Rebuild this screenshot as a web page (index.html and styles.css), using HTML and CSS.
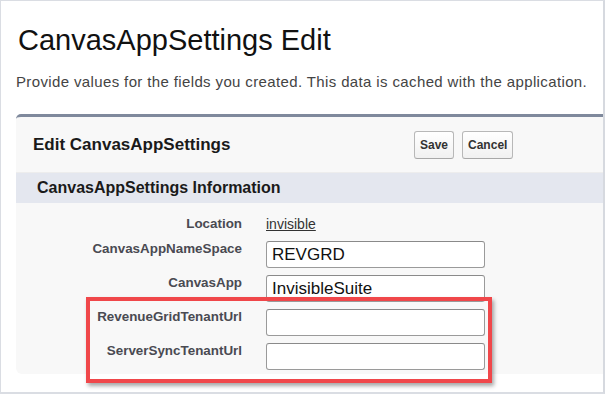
FILE: index.html
```html
<!DOCTYPE html>
<html>
<head>
<meta charset="utf-8">
<link rel="stylesheet" href="styles.css">
</head>
<body>
<div class="frame">
  <h1 class="title">CanvasAppSettings Edit</h1>
  <p class="desc">Provide values for the fields you created. This data is cached with the application.</p>
  <div class="panel">
    <div class="panel-head">
      <h2 class="panel-title">Edit CanvasAppSettings</h2>
      <div class="buttons">
        <button class="btn">Save</button>
        <button class="btn">Cancel</button>
      </div>
    </div>
    <div class="section-bar">CanvasAppSettings Information</div>
    <div class="fields">
      <div class="row row-static">
        <div class="label">Location</div>
        <div class="value"><a class="link">invisible</a></div>
      </div>
      <div class="row">
        <div class="label">CanvasAppNameSpace</div>
        <div class="value"><div class="input">REVGRD</div></div>
      </div>
      <div class="row">
        <div class="label">CanvasApp</div>
        <div class="value"><div class="input">InvisibleSuite</div></div>
      </div>
      <div class="highlight">
        <div class="row">
          <div class="label">RevenueGridTenantUrl</div>
          <div class="value"><div class="input"></div></div>
        </div>
        <div class="row">
          <div class="label">ServerSyncTenantUrl</div>
          <div class="value"><div class="input"></div></div>
        </div>
      </div>
    </div>
  </div>
</div>
</body>
</html>
```

FILE: styles.css
```css
* { box-sizing: border-box; }
html, body { margin: 0; padding: 0; background: #ffffff; }
.frame {
  width: 605px;
  height: 394px;
  border: 1px solid #dadde3;
  border-right: 2px solid #d6d9df;
  border-bottom: 2px solid #dadde3;
  overflow: hidden;
  font-family: "Liberation Sans", Arial, sans-serif;
  background: #ffffff;
}
.title {
  margin: 22px 0 0 17px;
  font-size: 29px;
  line-height: 34px;
  font-weight: normal;
  color: #111111;
}
.desc {
  margin: 16px 0 0 15px;
  font-size: 15px;
  letter-spacing: 0.37px;
  line-height: 18px;
  color: #444444;
  white-space: nowrap;
}
.panel {
  margin: 23px -20px 0 15px;
  background: #f8f8f8;
  border-top: 3px solid #7f899c;
  border-radius: 5px 5px 0 6px;
  padding-bottom: 4px;
}
.panel-head {
  display: flex;
  align-items: center;
  height: 55px;
  padding-left: 17px;
}
.panel-title {
  margin: 0;
  width: 381px;
  font-size: 17px;
  font-weight: bold;
  color: #1a1a1a;
}
.buttons { display: flex; gap: 8px; }
.btn {
  height: 28px;
  padding: 0 5px;
  font-family: "Liberation Sans", Arial, sans-serif;
  font-size: 12px;
  font-weight: bold;
  color: #333333;
  background: linear-gradient(#ffffff, #f1f1f1);
  border: 1px solid #b8b8b8;
  border-bottom-color: #a8a8a8;
  border-radius: 3px;
}
.section-bar {
  border-top: 1px solid #ededed;
  background: #e4e7ef;
  height: 31px;
  padding-left: 21px;
  display: flex;
  align-items: center;
  font-size: 16px;
  font-weight: bold;
  color: #1a1a1a;
}
.fields {
  padding-top: 10px;
  display: flex;
  flex-direction: column;
  gap: 7px;
}
.highlight {
  position: relative;
  display: flex;
  flex-direction: column;
  gap: 7px;
}
.highlight::after {
  content: "";
  position: absolute;
  left: 70px;
  top: -12px;
  width: 398px;
  height: 78px;
  border: 4px solid #f0474a;
  box-shadow: 2px 3px 4px rgba(0, 0, 0, 0.35);
}
.row {
  display: grid;
  grid-template-columns: 226px 219px;
  column-gap: 24px;
  align-items: start;
}
.row-static { height: 21px; align-items: center; }
.label {
  text-align: right;
  font-size: 13.4px;
  line-height: 16px;
  font-weight: bold;
  color: #4a4a52;
}
.link {
  font-size: 14px;
  color: #333333;
  text-decoration: underline;
}
.input {
  height: 27px;
  border: 1px solid #9a9a9a;
  border-top-color: #8a8a8a;
  border-radius: 3px;
  background: #ffffff;
  padding: 2px 5px 0;
  font-size: 17px;
  line-height: 22px;
  color: #111111;
}
```
